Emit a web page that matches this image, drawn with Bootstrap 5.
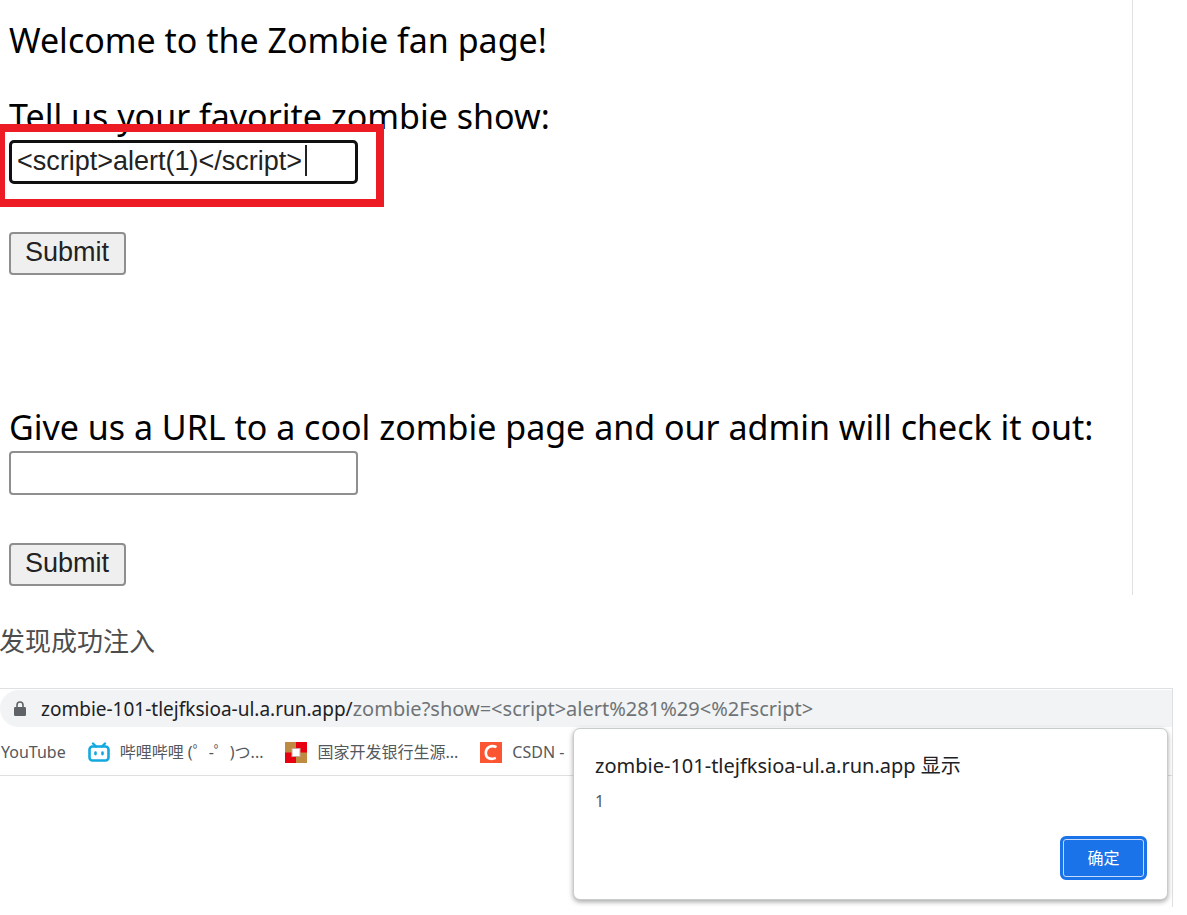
<!DOCTYPE html>
<html lang="zh-CN">
<head>
<meta charset="utf-8">
<meta name="viewport" content="width=device-width, initial-scale=1">
<title>Zombie 101</title>
<link href="https://cdn.jsdelivr.net/npm/bootstrap@5.3.0/dist/css/bootstrap.min.css" rel="stylesheet">
<style>
  body { font-family: "Noto Sans", "Noto Sans CJK SC", sans-serif; background: #fff; color: #000; }
  .fan-page { margin-right: 54px; padding: 16px 8px 9px 9px; border-right: 1px solid #e0e0e0; }
  .fan-text { display: block; font-size: 34px; line-height: 48px; }
  .fan-input, .fan-submit { font-family: "Liberation Sans", Arial, sans-serif; font-size: 27px; line-height: 36px; border: 2px solid #8f8f8f; border-radius: 4px; }
  .fan-input { width: 349px; height: 44px; padding: 0 6px; color: #222; background: #fff; }
  .fan-input:focus { outline: none; }
  .fan-input.active-field { border: 3px solid #101010; border-radius: 5px; padding: 0 5px 1px; }
  .fan-submit { height: 43px; padding: 0 15px 4px 14px; background: #efefef; color: #222; }
  .second-form { margin-top: 128px; }
  .caret-line { left: 296px; top: 5px; width: 2px; height: 31px; background: #222; }
  .highlight-box { left: -12px; top: -16px; width: 387px; height: 83px; border: 8px solid #ed1c24; }
  .note { font-size: 26px; line-height: 40px; color: #4d4d4d; margin: 26px 0 27px -1px; }
  .browser { margin-right: 14px; border: solid #dfe0e2; border-width: 1px 1px 0 0; min-height: 219px; }
  .address { background: #f1f3f4; height: 37px; margin-top: 1px; padding-left: 14px; border-radius: 19px 0 0 19px; font-size: 19px; color: #202124; }
  .address > span { margin-left: 15px; }
  .address .rest { color: #6f7377; font-size: 20px; }
  .bookmarks { height: 49px; padding: 2px 0 0 1px; border-bottom: 1px solid #dfe0e2; font-size: 16px; }
  .bookmarks a { color: #55585c; }
  .bookmarks a > span { margin-left: 10px; }
  .bookmarks a + a { margin-left: 22px; }
  .dialog-box { left: 573px; right: 4px; top: 39px; height: 172px; padding: 22px 20px 19px 21px; background: #fff; border: 1px solid #c9cccc; border-radius: 7px; box-shadow: 0 2px 5px rgba(0,0,0,.35); }
  .dialog-title { font-size: 20px; line-height: 30px; color: #202124; }
  .dialog-text { font-size: 16px; line-height: 24px; color: #55585c; margin-top: 8px; }
  .ok-btn { width: 87px; height: 44px; background: #1a73e8; color: #fff; border: 3px solid #1a73e8; border-radius: 6px; box-shadow: inset 0 0 0 1px #c5dafa; font-size: 16px; }
</style>
</head>
<body>
<main class="overflow-hidden">
  <section class="fan-page">
    <p class="fan-text mb-0">Welcome to the Zombie fan page!</p>
    <form class="mt-4 pt-1">
      <label class="fan-text" for="show">Tell us your favorite zombie show:</label>
      <div class="position-relative d-flex">
        <input class="fan-input active-field" id="show" type="text" value="&lt;script&gt;alert(1)&lt;/script&gt;">
        <span class="caret-line position-absolute"></span>
        <span class="highlight-box position-absolute"></span>
      </div>
      <button class="fan-submit mt-5" type="button">Submit</button>
    </form>
    <form class="second-form">
      <label class="fan-text" for="url">Give us a URL to a cool zombie page and our admin will check it out:</label>
      <input class="fan-input d-block" id="url" type="text">
      <button class="fan-submit mt-5" type="button">Submit</button>
    </form>
  </section>

  <p class="note">发现成功注入</p>

  <section class="browser position-relative">
    <div class="address d-flex align-items-center text-nowrap">
      <svg width="12" height="16" viewBox="0 0 12 16" aria-hidden="true"><path d="M3 7V4a3 3 0 0 1 6 0v3" fill="none" stroke="#5f6368" stroke-width="1.6"/><rect width="12" height="9" y="6" rx="1.2" fill="#5f6368"/></svg>
      <span>zombie-101-tlejfksioa-ul.a.run.app/<span class="rest">zombie?show=&lt;script&gt;alert%281%29&lt;%2Fscript&gt;</span></span>
    </div>
    <nav class="bookmarks d-flex align-items-center text-nowrap">
      <a class="text-decoration-none" href="#">YouTube</a>
      <a class="text-decoration-none d-flex align-items-center" href="#">
        <svg width="22" height="20" viewBox="0 0 22 20" aria-hidden="true"><g fill="none" stroke="#12a8e0" stroke-linecap="round"><rect x="1.5" y="4.5" width="19" height="14" rx="3" stroke-width="2.6"/><path d="M5 1.500l3 3M17 1.500l-3 3" stroke-width="2.400"/><path d="M7.500 10.500v1.600M14.500 10.500v1.600" stroke-width="2.600"/></g></svg>
        <span>哔哩哔哩 (゜-゜)つ...</span></a>
      <a class="text-decoration-none d-flex align-items-center" href="#">
        <svg width="22" height="21" viewBox="0 0 22 21" aria-hidden="true"><path fill="#bf8b40" d="M0 0h22v21H0z"/><path fill="#e60012" d="M11 0h11v10.500H11zM0 10.500h11V21H0z"/><rect x="7" y="6.500" width="8" height="8" fill="#fff" stroke="#c9a79b"/></svg>
        <span>国家开发银行生源...</span></a>
      <a class="text-decoration-none d-flex align-items-center" href="#">
        <svg width="22" height="21" viewBox="0 0 22 21" aria-hidden="true"><path fill="#fc5531" d="M0 0h22v21H0z"/><path d="M16.500 5.200C10.500 2.300 5.800 6 5.800 11c0 5.200 4.800 7.300 10 4.900" fill="none" stroke="#fff" stroke-width="2.600"/></svg>
        <span>CSDN -</span></a>
    </nav>
    <div class="dialog-box position-absolute d-flex flex-column" role="dialog" aria-labelledby="dlg-title">
      <div class="dialog-title" id="dlg-title">zombie-101-tlejfksioa-ul.a.run.app 显示</div>
      <div class="dialog-text">1</div>
      <button class="ok-btn mt-auto align-self-end" type="button">确定</button>
    </div>
  </section>
</main>
<script src="https://cdn.jsdelivr.net/npm/bootstrap@5.3.0/dist/js/bootstrap.bundle.min.js"></script>
</body>
</html>
